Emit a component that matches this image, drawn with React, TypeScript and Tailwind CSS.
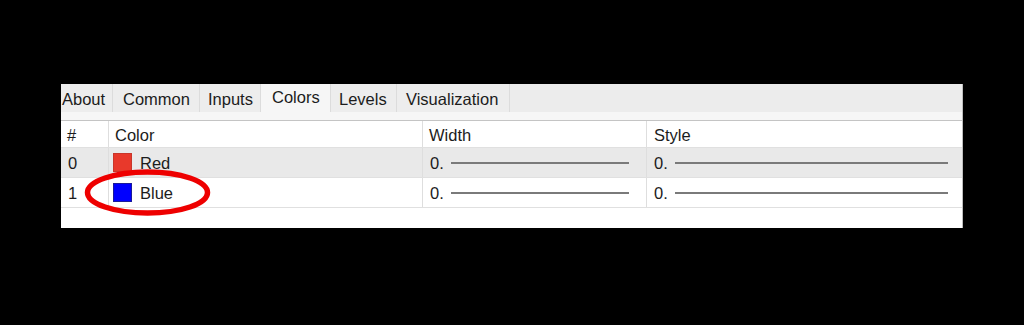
import React from 'react'

const tabs = [
  { label: 'About', w: 'w-[52px]', pad: 'pl-[1px]' },
  { label: 'Common', w: 'w-[87px]', pad: 'pl-[10px]' },
  { label: 'Inputs', w: 'w-[61px]', pad: 'pl-[8px]' },
  { label: 'Colors', w: 'w-[70px]', pad: 'pl-[11px]', active: true },
  { label: 'Levels', w: 'w-[66px]', pad: 'pl-[8px]' },
  { label: 'Visualization', w: 'w-[113px]', pad: 'pl-[9px]' },
]

const rows = [
  { id: 0, name: 'Red', swatch: 'bg-[#e8392b] border-[#c9362a]', bg: 'bg-[#e9e9e9]' },
  { id: 1, name: 'Blue', swatch: 'bg-[#0000ff] border-[#1a1a9a]', bg: 'bg-white' },
]

function Cell({ w, children, last }: { w: string; children?: React.ReactNode; last?: boolean }) {
  return (
    <div className={`${w} flex items-center pt-[2px] ${last ? '' : 'border-r border-[#dedede]'}`}>
      {children}
    </div>
  )
}

export default function App() {
  return (
    <div className="w-[1024px] h-[325px] bg-black pt-[84px] pl-[61px] text-[16.5px] text-[#1c1c1c]"
      style={{ fontFamily: '"Liberation Sans", Arial, sans-serif' }}>
      <div className="relative w-[902px] h-[144px] bg-white border-r border-[#bdbdbd] flex flex-col">
        {/* Tabs */}
        <div className="flex h-[28px] bg-[#ececec]">
          {tabs.map(t => (
            <div key={t.label}
              className={`${t.w} ${t.pad} h-full flex border-r border-[#dcdcdc] ${
                t.active ? 'bg-[#f6f6f6] items-start pt-[1px]' : 'bg-[#ededed] items-center pt-[2px]'
              }`}>
              {t.label}
            </div>
          ))}
        </div>
        <div className="h-[8px] bg-[#f6f6f6] border-b border-[#c4c4c4] box-content" />

        {/* Header */}
        <div className="flex h-[27px] border-b border-[#e0e0e0]">
          <Cell w="w-[48px]"><span className="pl-[6px]">#</span></Cell>
          <Cell w="w-[314px]"><span className="pl-[6px]">Color</span></Cell>
          <Cell w="w-[224px]"><span className="pl-[6px]">Width</span></Cell>
          <Cell w="w-[315px]" last><span className="pl-[7px]">Style</span></Cell>
        </div>

        {/* Rows */}
        {rows.map(r => (
          <div key={r.id} className={`flex h-[30px] border-b border-[#e0e0e0] ${r.bg}`}>
            <Cell w="w-[48px]"><span className="pl-[7px]">{r.id}</span></Cell>
            <Cell w="w-[314px]">
              <span className={`ml-[4px] -mt-[2px] w-[19px] h-[19px] border ${r.swatch}`} />
              <span className="ml-[8px]">{r.name}</span>
            </Cell>
            <Cell w="w-[224px]">
              <span className="pl-[7px]">0.</span>
              <span className="ml-[7px] mr-[17px] -mt-[2px] flex-1 h-[2px] bg-[#7a7a7a]" />
            </Cell>
            <Cell w="w-[315px]" last>
              <span className="pl-[7px]">0.</span>
              <span className="ml-[7px] mr-[14px] -mt-[2px] flex-1 h-[2px] bg-[#7a7a7a]" />
            </Cell>
          </div>
        ))}
        <div className="flex-1" />

        {/* Highlight ellipse */}
        <svg className="absolute left-[22px] top-[84px]" width="129" height="49" viewBox="0 0 129 49">
          <ellipse cx="64.5" cy="24.5" rx="60" ry="20.5" fill="none" stroke="#ee0000" strokeWidth="5.5" />
        </svg>
      </div>
    </div>
  )
}
